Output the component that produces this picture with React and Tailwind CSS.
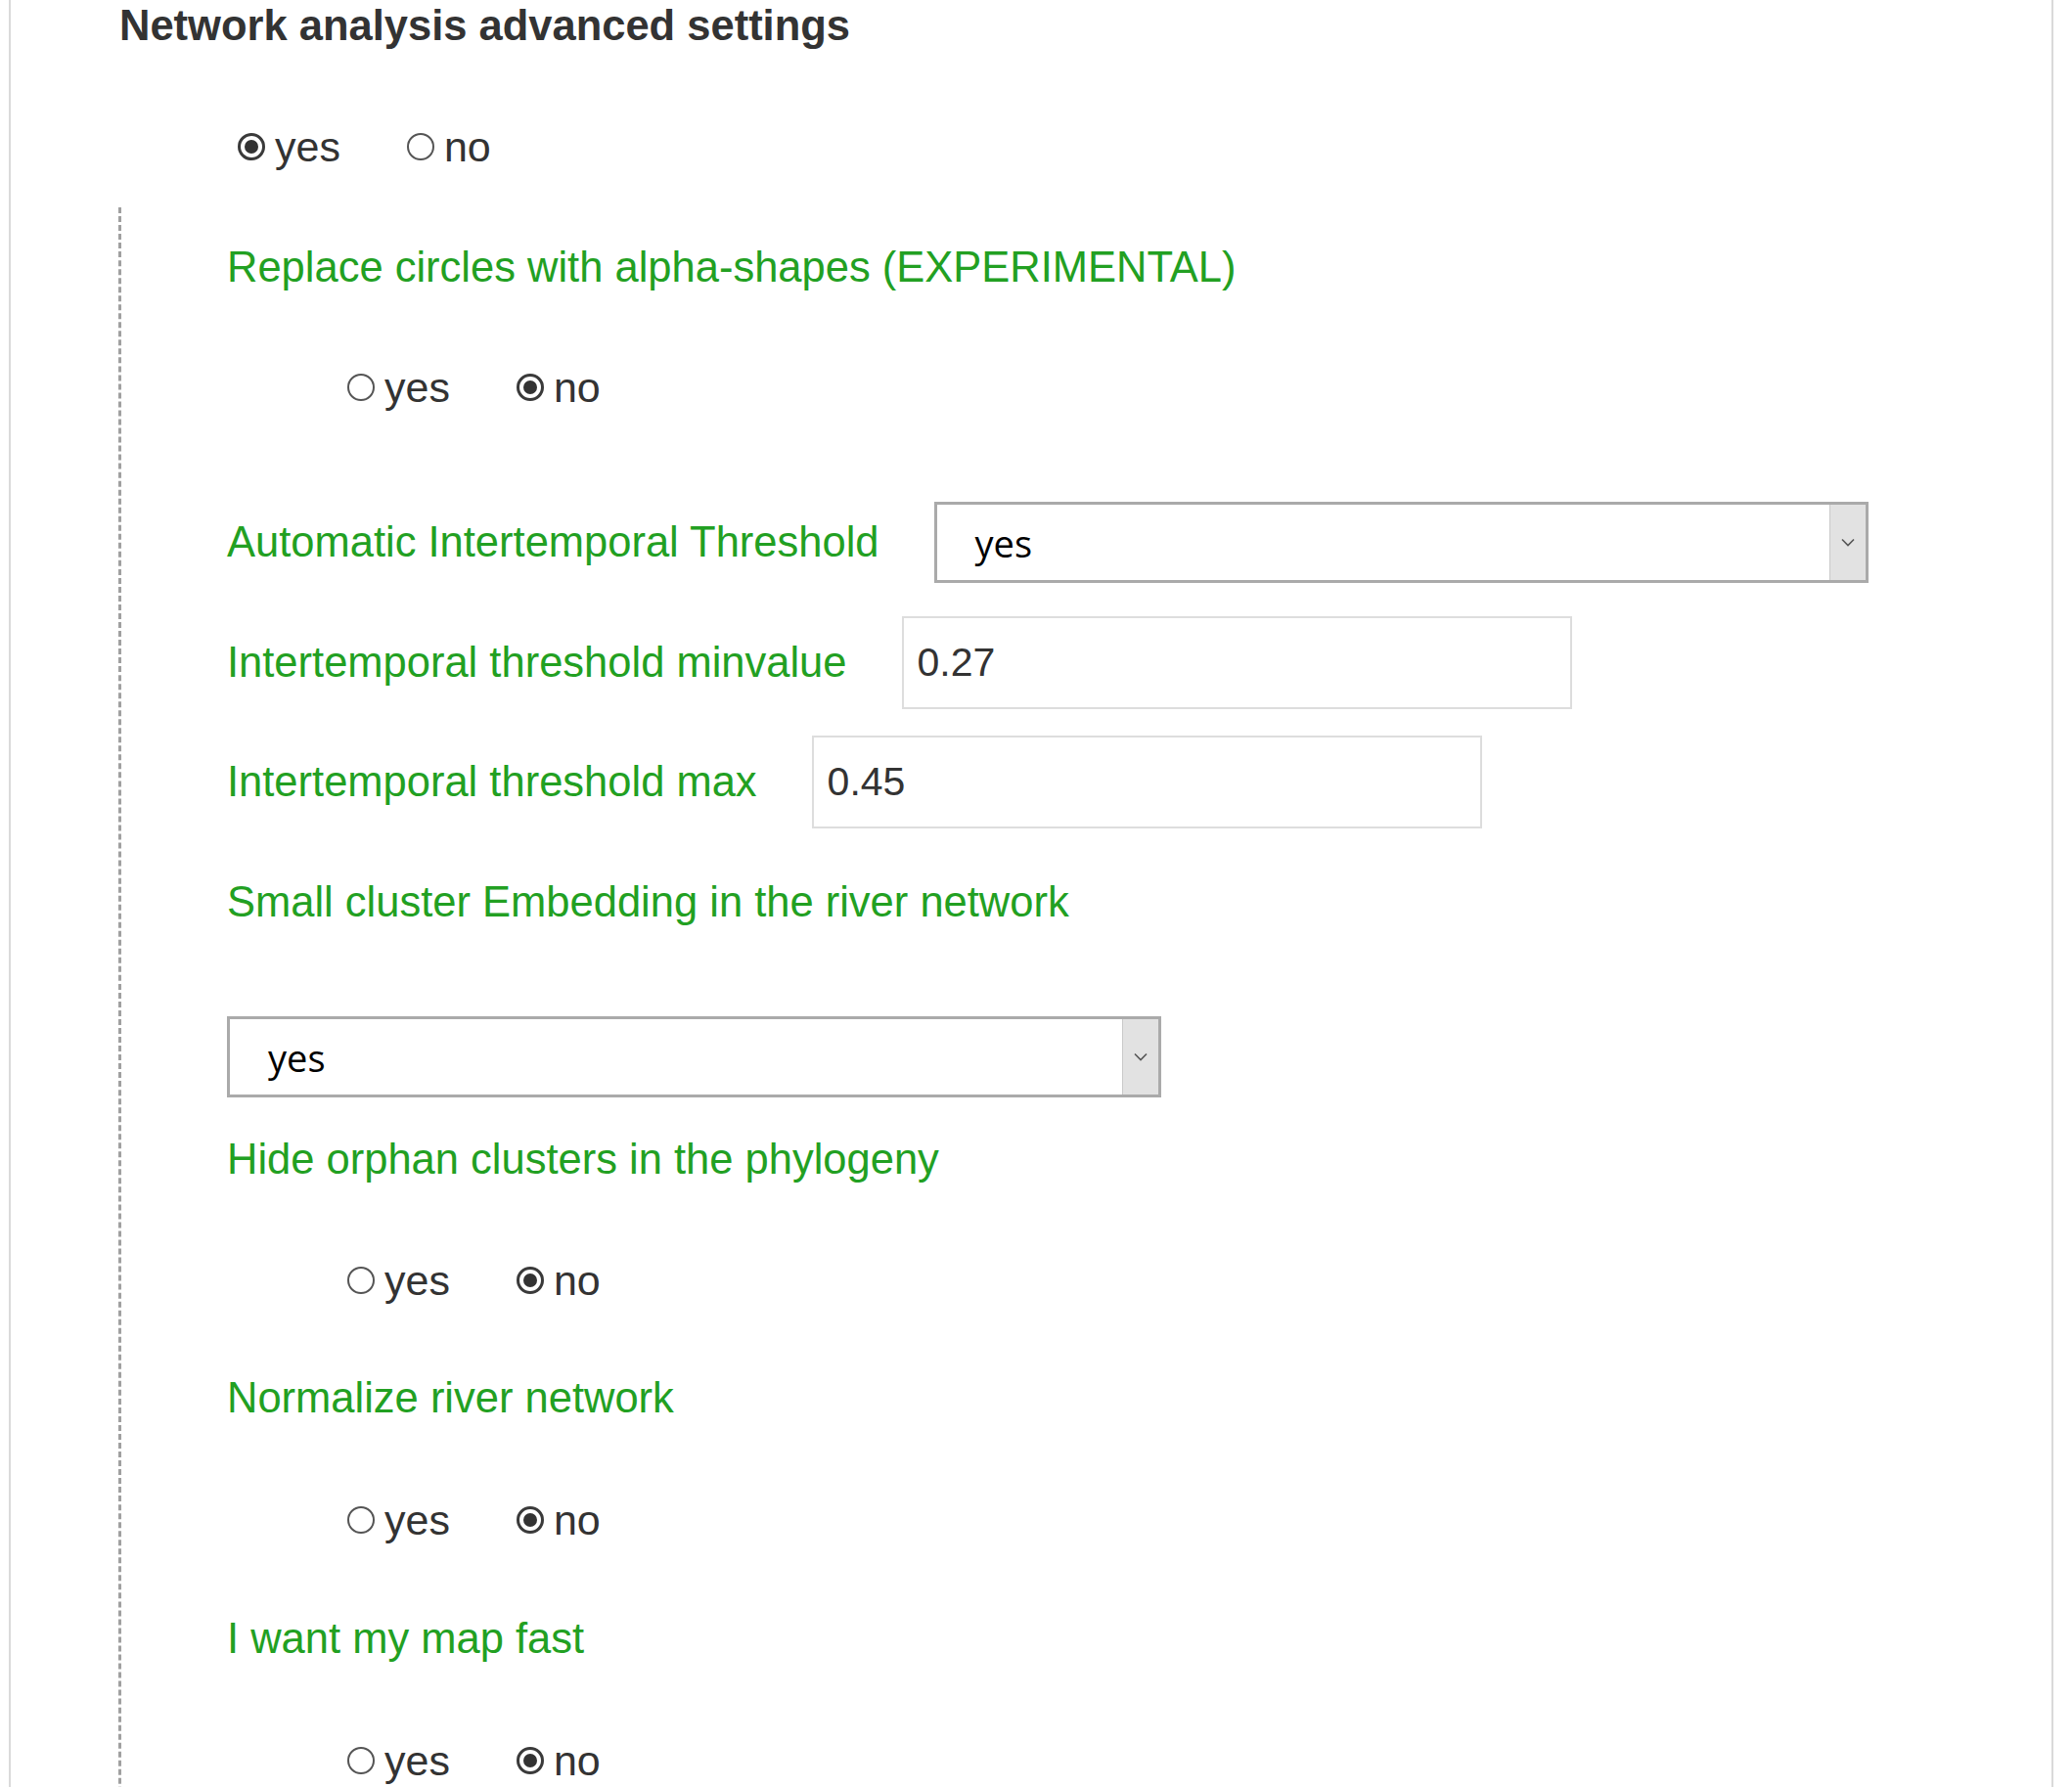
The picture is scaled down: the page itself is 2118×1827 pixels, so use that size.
function Radio({ checked }) {
  return (
    <span
      className={
        "w-[28px] h-[28px] rounded-full flex items-center justify-center shrink-0 bg-white " +
        (checked ? "border-[3px] border-[#3a3a3a]" : "border-2 border-[#555]")
      }
    >
      {checked && <span className="w-[14px] h-[14px] rounded-full bg-[#333]" />}
    </span>
  );
}

function RadioRow({ value, className = "" }) {
  return (
    <div className={"flex items-center h-[50px] gap-[68px] " + className}>
      {["yes", "no"].map((opt) => (
        <label key={opt} className="flex items-center gap-[10px] text-[43px] leading-none text-[#333]">
          <Radio checked={value === opt} />
          <span>{opt}</span>
        </label>
      ))}
    </div>
  );
}

function Label({ children, className = "" }) {
  return (
    <div className={"h-[50px] flex items-center text-[43.5px] leading-none text-[#22a022] whitespace-nowrap " + className}>
      {children}
    </div>
  );
}

function Select({ value }) {
  return (
    <div className="flex h-[83px] w-[955px] shrink-0 border-[3px] border-[#aaa] bg-white">
      <span className="flex-1 flex items-center pl-[39px] text-[38px] leading-none text-black font-['Open_Sans',sans-serif]">
        {value}
      </span>
      <span className="w-[37px] flex items-center justify-center bg-[#e2e2e2] border-l border-[#c9c9c9]">
        <svg width="14" height="9" viewBox="0 0 14 9" fill="none">
          <path d="M1 1.5l6 6 6-6" stroke="#555" strokeWidth="1.6" />
        </svg>
      </span>
    </div>
  );
}

function TextInput({ value }) {
  return (
    <div className="flex items-center w-[685px] h-[95px] shrink-0 border-2 border-[#ddd] bg-white pl-[14px] text-[41px] leading-none text-[#333]">
      {value}
    </div>
  );
}

export default function App() {
  return (
    <div className="min-h-screen bg-white font-['Liberation_Sans',Arial,sans-serif]">
      <div className="ml-[9px] w-[2090px] border-x-2 border-[#dadada] pt-[2px]">
        <h2 className="h-[50px] flex items-center pl-[111px] text-[43.5px] leading-none font-bold text-[#333]">
          Network analysis advanced settings
        </h2>

        <RadioRow value="yes" className="mt-[73px] pl-[232px]" />

        <div className="mt-[37px] ml-[110px] border-l-[3px] border-dashed border-[#a0a0a0] pl-[108px] pt-[37px] pb-[80px]">
          <Label>Replace circles with alpha-shapes (EXPERIMENTAL)</Label>
          <RadioRow value="no" className="mt-[72px] pl-[123px]" />

          <div className="mt-[92px] flex items-center gap-[56px]">
            <Label>Automatic Intertemporal Threshold</Label>
            <Select value="yes" />
          </div>

          <div className="mt-[34px] flex items-center gap-[56px]">
            <Label>Intertemporal threshold minvalue</Label>
            <TextInput value="0.27" />
          </div>

          <div className="mt-[27px] flex items-center gap-[56px]">
            <Label>Intertemporal threshold max</Label>
            <TextInput value="0.45" />
          </div>

          <Label className="mt-[51px]">Small cluster Embedding in the river network</Label>
          <div className="mt-[91px]">
            <Select value="yes" />
          </div>

          <Label className="mt-[39px]">Hide orphan clusters in the phylogeny</Label>
          <RadioRow value="no" className="mt-[73px] pl-[123px]" />

          <Label className="mt-[71px]">Normalize river network</Label>
          <RadioRow value="no" className="mt-[74px] pl-[123px]" />

          <Label className="mt-[72px]">I want my map fast</Label>
          <RadioRow value="no" className="mt-[74px] pl-[123px]" />
        </div>
      </div>
    </div>
  );
}
